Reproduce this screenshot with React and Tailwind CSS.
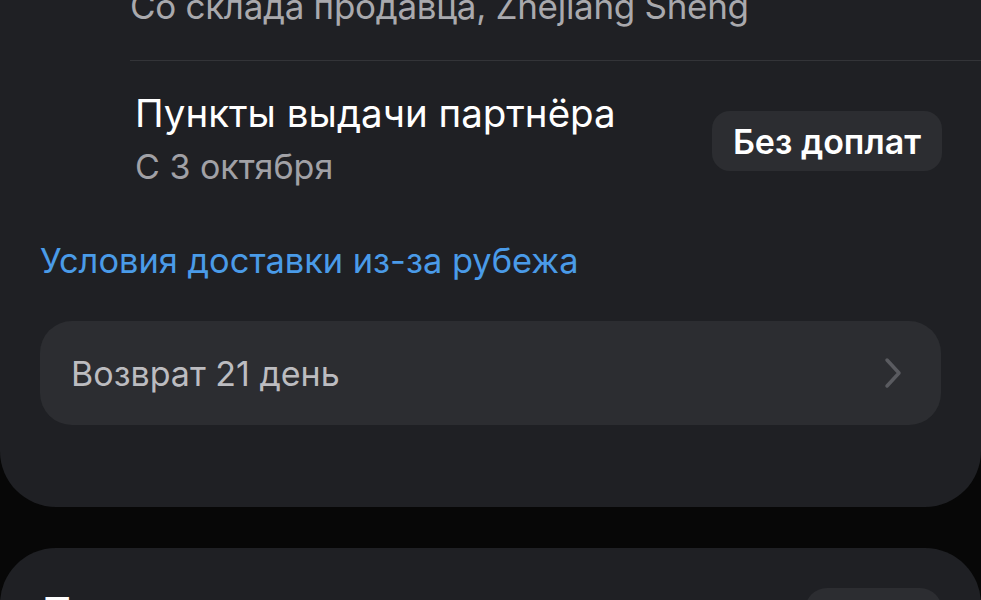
import React from "react";

export default function App() {
  return (
    <div
      className="h-[600px] w-[981px] overflow-hidden bg-[#070707]"
      style={{ fontFamily: "Inter, 'Noto Sans', sans-serif" }}
    >
      <div className="-mt-[16px] rounded-b-[56px] bg-[#1f2024] pb-[82px]">
        <div className="pl-[130px]">
          <div className="h-[77px] border-b border-[#333438]">
            <div className="text-[35px] leading-[44px] tracking-[-0.3px] text-[#a9a9ad]">
              Со склада продавца, Zhejiang Sheng
            </div>
          </div>
        </div>
        <div className="flex items-center justify-between pl-[135px] pr-[39px] pt-[28px]">
          <div>
            <div className="text-[38.5px] leading-[48px] text-white">Пункты выдачи партнёра</div>
            <div className="mt-[8px] text-[34px] leading-[44px] text-[#a1a1a6]">С 3 октября</div>
          </div>
          <div className="mt-[4px] flex h-[60px] items-center rounded-[18px] bg-[#2c2d31] px-[21px] text-[34px] font-semibold text-white">
            Без доплат
          </div>
        </div>
        <div className="px-[40px] pt-[50px] text-[34.4px] leading-[44px] text-[#4a9be8]">
          Условия доставки из-за рубежа
        </div>
        <div className="mx-[40px] mt-[38px] flex h-[104px] items-center justify-between rounded-[32px] bg-[#2c2d31] pl-[31px] pr-[38px]">
          <span className="text-[34px] text-[#bcbcc0]">Возврат 21 день</span>
          <svg width="20" height="32" viewBox="0 0 20 32" fill="none">
            <path d="M4 3 L16 16 L4 29" stroke="#5a5b60" strokeWidth="3.5" strokeLinecap="round" strokeLinejoin="round" />
          </svg>
        </div>
      </div>
      <div className="mt-[41px] h-[200px] rounded-t-[56px] bg-[#1f2024] px-[43px] pt-[40px]">
        <div className="flex items-start justify-between">
          <div className="text-[38px] font-bold leading-[46px] text-white">Продавец</div>
          <div className="mr-[-4px] h-[60px] w-[137px] rounded-[22px] bg-[#2c2d31]" />
        </div>
      </div>
    </div>
  );
}
